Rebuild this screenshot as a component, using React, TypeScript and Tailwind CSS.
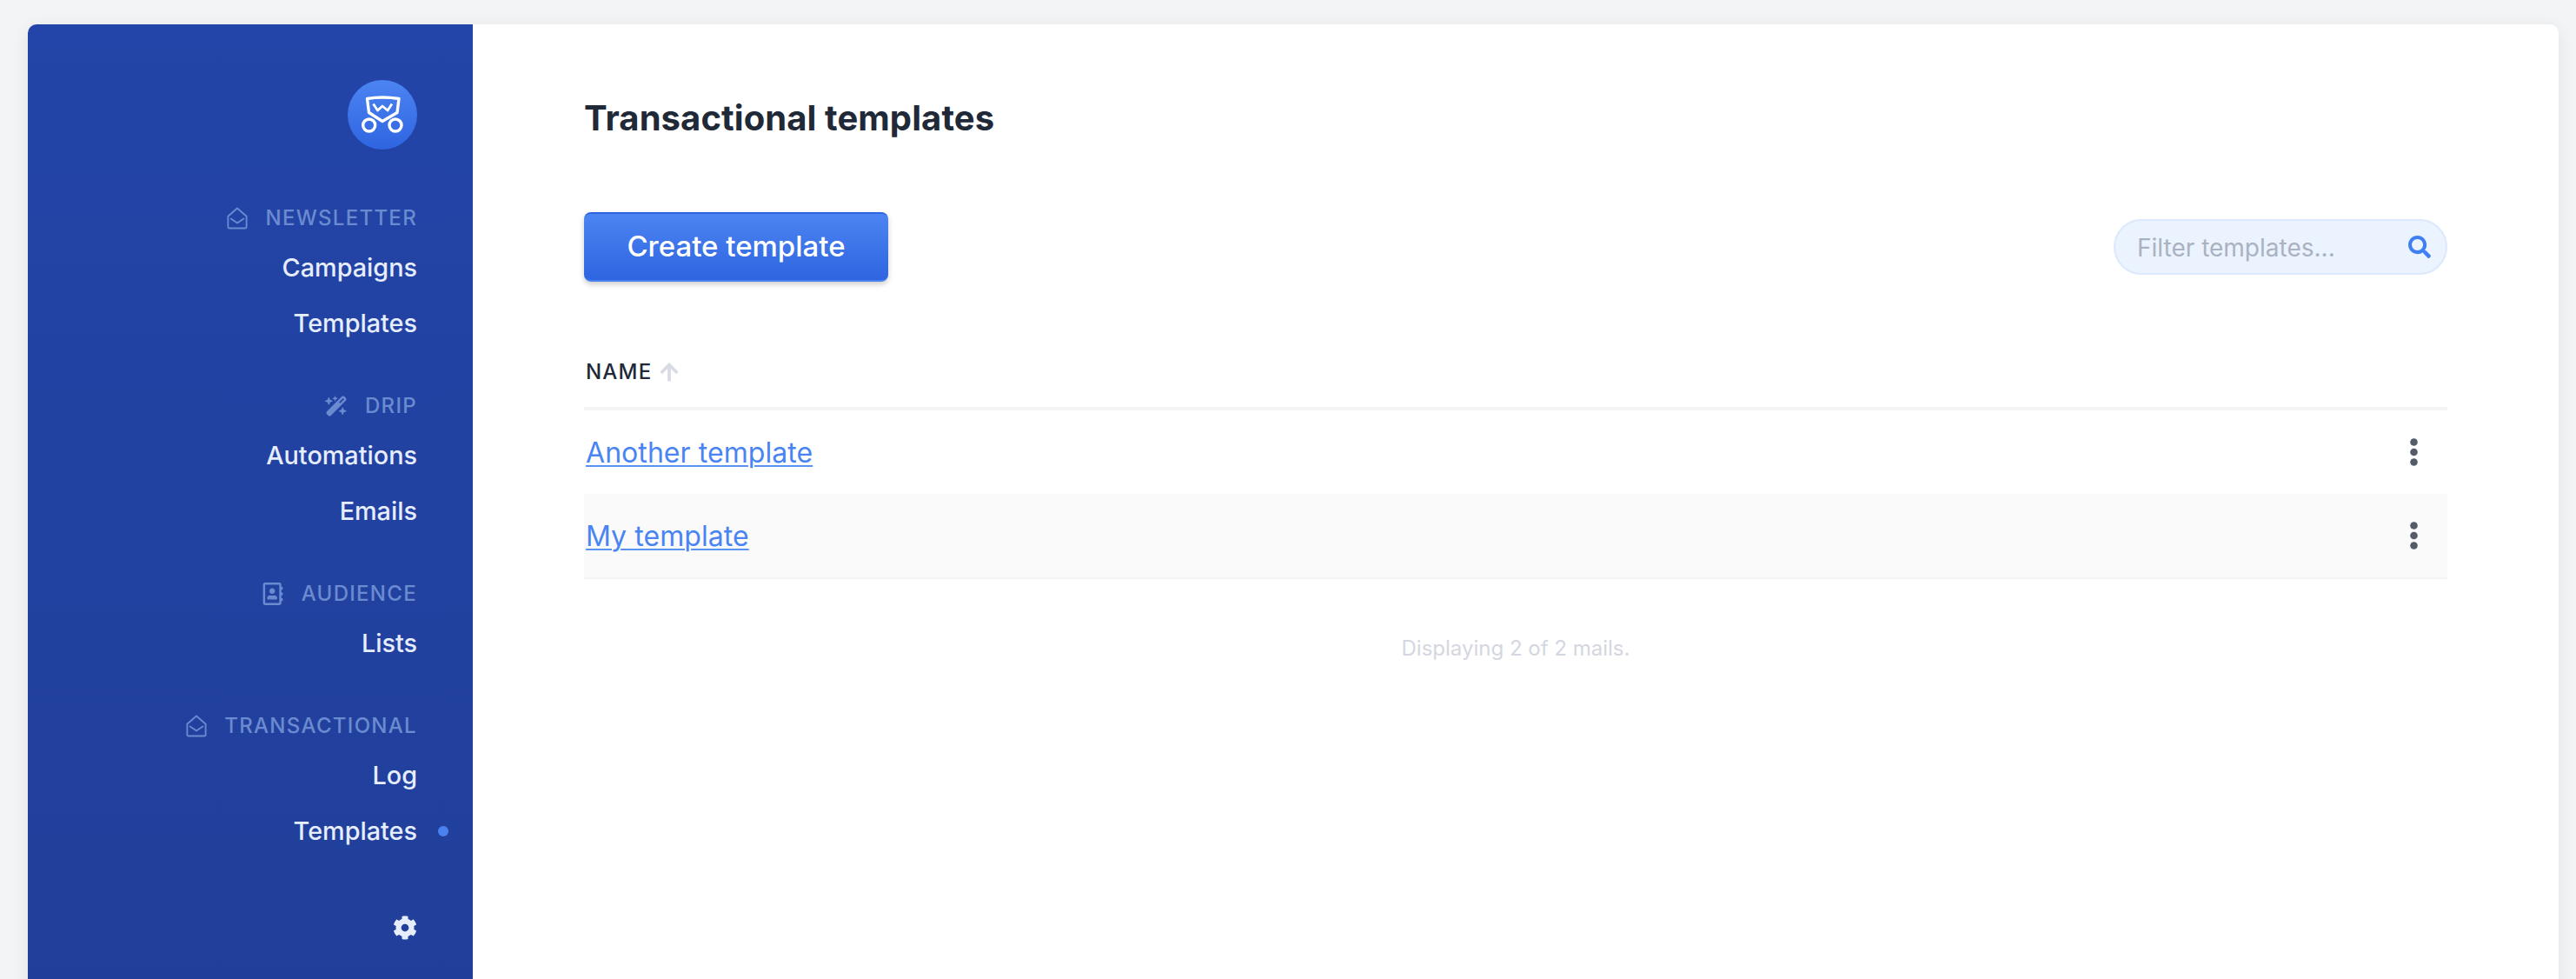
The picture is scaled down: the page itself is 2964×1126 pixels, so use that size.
import { FaArrowUp, FaCog, FaRegAddressBook, FaSearch } from 'react-icons/fa';
import { FaWandMagicSparkles } from 'react-icons/fa6';
import type { ReactNode } from 'react';

function MailOpenIcon() {
  return (
    <svg viewBox="0 0 26 28" className="h-[26px] w-[24px]" fill="none" stroke="currentColor" strokeWidth="2" strokeLinejoin="round" strokeLinecap="round">
      <path d="M1.5 11.5 13 1.5l11.5 10V25a1.5 1.5 0 0 1-1.5 1.5H3A1.5 1.5 0 0 1 1.5 25Z" />
      <path d="m5 14.5 8 5.5 8-5.5" />
    </svg>
  );
}

function Logo() {
  return (
    <div className="flex h-20 w-20 items-center justify-center rounded-full bg-gradient-to-b from-[#4c84f2] to-[#2f64e0]">
      <svg viewBox="0 0 80 80" className="h-20 w-20" fill="none" stroke="white" strokeWidth="3.4" strokeLinejoin="round">
        <path d="M22.5 21.5Q40 18.5 59 21.5L57 37.5 40 47.5 24.5 37.5Z" />
        <path d="M29.5 27.5l5 7.5L40 30l6 5 5-7.5" strokeWidth="2.8" />
        <circle cx="24.7" cy="52" r="7" fill="#3a6fe6" />
        <circle cx="55" cy="52" r="7" fill="#3a6fe6" />
      </svg>
    </div>
  );
}

function NavSection({ icon, label, items }: { icon: ReactNode; label: string; items: { name: string; active?: boolean }[] }) {
  return (
    <div className="flex flex-col items-end">
      <div className="flex h-[50px] items-center gap-[20px] text-[24px] font-medium tracking-[1.3px] text-[#6b8bd0]">
        {icon}
        <span>{label}</span>
      </div>
      {items.map((item) => (
        <a key={item.name} className="relative flex h-[64px] items-center text-[28.8px] font-medium text-[#e6edfd]">
          {item.name}
          {item.active && <span className="absolute right-[-36px] top-[26px] h-3 w-3 rounded-full bg-[#4a80f0]" />}
        </a>
      ))}
    </div>
  );
}

function Sidebar() {
  return (
    <aside className="flex w-[512px] shrink-0 flex-col items-end bg-gradient-to-b from-[#2344a8] to-[#213f99] pr-[64px] pt-[64px]">
      <Logo />
      <nav className="mt-[54px] flex flex-col items-end gap-[38px]">
        <NavSection icon={<MailOpenIcon />} label="NEWSLETTER" items={[{ name: 'Campaigns' }, { name: 'Templates' }]} />
        <NavSection icon={<FaWandMagicSparkles size={26} />} label="DRIP" items={[{ name: 'Automations' }, { name: 'Emails' }]} />
        <NavSection icon={<FaRegAddressBook size={26} />} label="AUDIENCE" items={[{ name: 'Lists' }]} />
        <NavSection icon={<MailOpenIcon />} label="TRANSACTIONAL" items={[{ name: 'Log' }, { name: 'Templates', active: true }]} />
      </nav>
      <FaCog size={28} className="mt-[65px] text-[#e6edfd]" />
    </aside>
  );
}

function MoreButton() {
  return (
    <svg viewBox="0 0 9 32" className="h-[32px] w-[9px]" fill="#565b68">
      <circle cx="4.5" cy="4.5" r="4.3" />
      <circle cx="4.5" cy="16" r="4.3" />
      <circle cx="4.5" cy="27.5" r="4.3" />
    </svg>
  );
}

function TemplateRow({ name, striped }: { name: string; striped?: boolean }) {
  return (
    <div className={`flex items-center justify-between pl-[2px] pr-[34px] ${striped ? 'h-[98px] border-b-2 border-[#f3f4f6] bg-[#fafafa]' : 'h-[96px]'}`}>
      <a className="pt-[2px] text-[32px] tracking-[0.06px] text-[#4a84f2] underline decoration-[#5a92f4] decoration-2 underline-offset-[3px]">{name}</a>
      <MoreButton />
    </div>
  );
}

export default function App() {
  return (
    <div className="h-[1126px] overflow-hidden bg-[#f3f4f6] pl-[32px] pr-[20px] pt-[28px] font-['Inter',sans-serif]">
      <div className="flex h-[1200px] overflow-hidden rounded-t-[10px] bg-white shadow-[0_4px_20px_rgba(0,0,0,0.08)]">
        <Sidebar />
        <main className="flex-1 px-[128px] pt-[81px]">
          <h1 className="text-[40px] font-bold leading-[54px] tracking-[0.08px] text-[#1f2937]">Transactional templates</h1>
          <div className="mt-[81px] flex items-center justify-between">
            <button className="h-[80px] w-[350px] rounded-[8px] border-t-2 border-b-2 border-t-[#2f64e0] border-b-[#4a80f0] bg-gradient-to-b from-[#4c84f2] to-[#2f64e0] text-[33px] font-medium text-white shadow-[0_3px_6px_rgba(0,0,0,0.2)]">
              Create template
            </button>
            <div className="flex h-[64px] w-[384px] items-center justify-between rounded-full border-2 border-[#dbe8fd] bg-[#ebf3fe] pl-[25px] pr-[17px]">
              <span className="pt-[2px] text-[28px] text-[#aab2c2]">Filter templates...</span>
              <FaSearch size={26} className="text-[#3f7ff2]" />
            </div>
          </div>
          <div className="mt-[64px] flex h-[84px] items-center gap-[8px] border-b-4 border-[#f3f4f6] pl-[2px] text-[24px] font-medium tracking-[1.2px] text-[#1f2937]">
            NAME
            <FaArrowUp size={24} className="text-[#d8dbe4]" />
          </div>
          <TemplateRow name="Another template" />
          <TemplateRow name="My template" striped />
          <p className="mt-[62px] text-center text-[24px] text-[#d4d7e0]">Displaying 2 of 2 mails.</p>
        </main>
      </div>
    </div>
  );
}
